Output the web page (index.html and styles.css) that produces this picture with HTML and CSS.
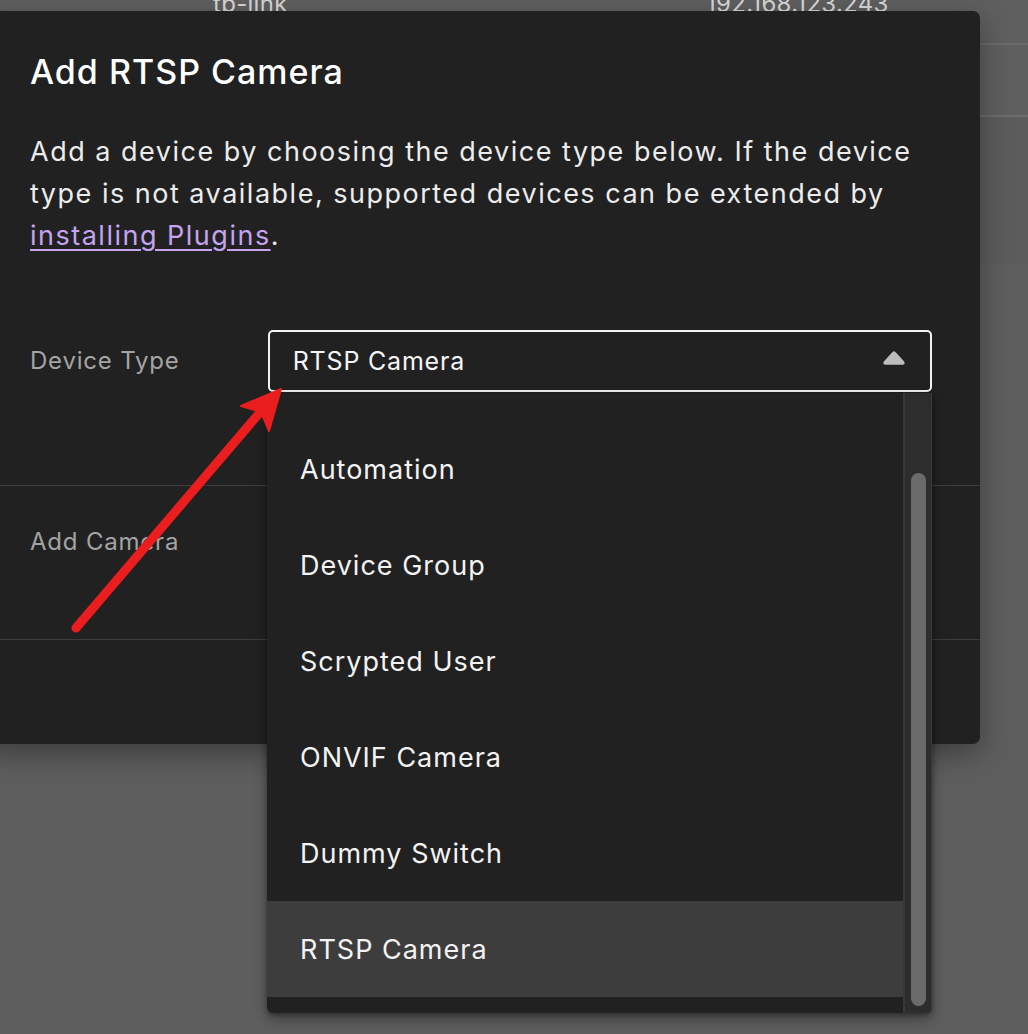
FILE: index.html
```html
<!DOCTYPE html>
<html lang="en">
<head>
<meta charset="utf-8">
<title>Add RTSP Camera</title>
<link rel="stylesheet" href="styles.css">
</head>
<body>
<div class="backdrop">
  <div class="bg-row bg-row-first"><span class="bg-name">tp-link</span><span class="bg-ip">192.168.123.243</span></div>
  <div class="bg-row"></div>
  <div class="bg-row bg-row-tall"></div>
</div>

<div class="dialog">
  <h1 class="dialog-title">Add RTSP Camera</h1>
  <p class="dialog-text">Add a device by choosing the device type below. If the device type is not available, supported devices can be extended by <a class="link" href="#">installing Plugins</a>.</p>
  <div class="section section-form">
    <div class="form-row">
      <label class="field-label">Device Type</label>
      <div class="select">
        <span class="select-value">RTSP Camera</span>
        <svg class="caret" width="24" height="16" viewBox="0 0 24 16"><path d="M10.3 2.2 Q12 0.3 13.7 2.2 L22.2 11.6 Q23.6 14.8 20.4 14.8 L3.6 14.8 Q0.4 14.8 1.8 11.6 Z" fill="#bdbdbd"/></svg>
      </div>
    </div>
  </div>
  <div class="section section-add">
    <span class="field-label">Add Camera</span>
  </div>
  <div class="section section-foot"></div>
</div>

<div class="menu">
  <ul class="menu-list">
    <li class="menu-item">Automation</li>
    <li class="menu-item">Device Group</li>
    <li class="menu-item">Scrypted User</li>
    <li class="menu-item">ONVIF Camera</li>
    <li class="menu-item">Dummy Switch</li>
    <li class="menu-item is-active">RTSP Camera</li>
  </ul>
  <div class="scrollbar"><div class="thumb"></div></div>
</div>

<svg class="annotation" width="1028" height="1034" viewBox="0 0 1028 1034">
  <line x1="76" y1="628" x2="262" y2="410" stroke="#ea1d1f" stroke-width="9" stroke-linecap="round"/>
  <path d="M281 389 L241 406 L261 412 L269 431 Z" fill="#ea1d1f" stroke="#ea1d1f" stroke-width="2" stroke-linejoin="round"/>
</svg>
</body>
</html>
```
FILE: styles.css
```css
* { box-sizing: border-box; }
html, body { margin: 0; padding: 0; }
body {
  width: 1028px;
  height: 1034px;
  overflow: hidden;
  background: #5e5e5e;
  font-family: Inter, "Liberation Sans", sans-serif;
  position: relative;
}

.backdrop { display: flex; flex-direction: column; }
.bg-row {
  height: 72px;
  border-bottom: 2px solid #6c6c6c;
  background: #5f5f5f;
  position: relative;
}
.bg-row-first { height: 45px; }
.bg-name, .bg-ip {
  position: absolute;
  top: -11px;
  font-size: 24px;
  line-height: 30px;
  color: #d8d8d8;
  letter-spacing: 0.3px;
}
.bg-name { left: 213px; }
.bg-ip { left: 706px; }
.bg-row-tall { height: 147px; border-bottom: none; background: #5c5c5c; }

.dialog {
  position: absolute;
  left: -20px;
  top: 11px;
  width: 1000px;
  height: 733px;
  background: #212121;
  border-radius: 7px;
  box-shadow: 0 10px 30px rgba(0,0,0,0.35);
  display: flex;
  flex-direction: column;
}
.dialog-title {
  margin: 41px 0 0 50px;
  font-size: 34px;
  line-height: 40px;
  font-weight: 500;
  color: #ffffff;
  letter-spacing: 1px;
}
.dialog-text {
  margin: 39px 40px 0 50px;
  font-size: 27px;
  line-height: 42px;
  color: #ececec;
  letter-spacing: 1.5px;
}
.link { color: #c5a3ef; text-decoration: underline; text-underline-offset: 4px; }

.section-form {
  height: 229px;
  padding: 73px 48px 0 50px;
  border-bottom: 1px solid #3d3d3d;
}
.form-row { display: flex; align-items: center; }
.field-label {
  width: 238px;
  font-size: 24px;
  line-height: 30px;
  color: #a4a4a4;
  letter-spacing: 0.8px;
}
.select {
  width: 665px;
  height: 62px;
  border: 2px solid #f2f2f2;
  border-radius: 5px;
  display: flex;
  align-items: center;
  justify-content: space-between;
  padding: 0 24px 0 23px;
}
.select-value { font-size: 25px; color: #f5f5f5; letter-spacing: 0.8px; }
.caret { display: block; margin-top: -6px; }

.section-add {
  height: 154px;
  padding: 41px 0 0 50px;
  border-bottom: 1px solid #3d3d3d;
}
.section-foot { flex: 1; }

.menu {
  position: absolute;
  left: 267px;
  top: 393px;
  width: 665px;
  height: 620px;
  background: #212121;
  border-radius: 0 0 6px 6px;
  box-shadow: 0 6px 14px rgba(0,0,0,0.35), 0 2px 4px rgba(0,0,0,0.3);
  display: flex;
  overflow: hidden;
}
.menu-list {
  list-style: none;
  margin: 0;
  padding: 28px 0 0 0;
  flex: 1;
}
.menu-item {
  height: 96px;
  display: flex;
  align-items: center;
  padding-left: 33px;
  font-size: 27px;
  color: #f3f3f3;
  letter-spacing: 1px;
}
.menu-item.is-active { background: #3d3d3d; }
.scrollbar {
  width: 29px;
  background: #2d2d2d;
  border-left: 2px solid #383838;
  border-right: 1px solid #3a3a3a;
  padding: 80px 0 0 6px;
}
.thumb {
  width: 15px;
  height: 533px;
  background: #6b6b6b;
  border-radius: 8px;
}

.annotation { position: absolute; left: 0; top: 0; pointer-events: none; }
```
